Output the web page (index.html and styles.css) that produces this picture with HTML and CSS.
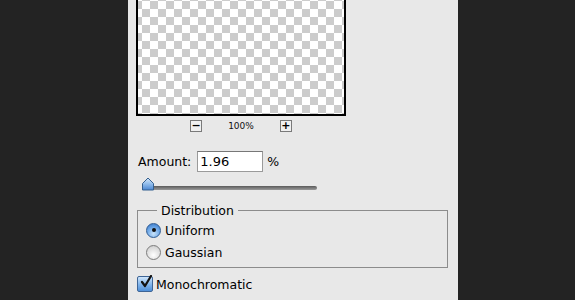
FILE: index.html
```html
<!DOCTYPE html>
<html lang="en">
<head>
  <meta charset="UTF-8">
  <title>Add Noise</title>
  <link rel="stylesheet" href="styles.css">
</head>
<body>
  <div class="panel">
    <div class="preview"></div>
    <div class="zoom-row">
      <span class="zoom-btn">&minus;</span>
      <span class="zoom-value">100%</span>
      <span class="zoom-btn">+</span>
    </div>

    <div class="amount-row">
      <label for="amount">Amount:</label>
      <input type="text" id="amount" value="1.96">
      <span class="unit">%</span>
    </div>
    <div class="slider">
      <div class="slider-track"></div>
      <svg class="slider-thumb" width="14" height="14" viewBox="0 0 14 14">
        <defs>
          <linearGradient id="thumb" x1="0" y1="0" x2="0" y2="1">
            <stop offset="0" stop-color="#d6e8fb"/>
            <stop offset="0.5" stop-color="#8fbbeb"/>
            <stop offset="1" stop-color="#4a86d2"/>
          </linearGradient>
        </defs>
        <path d="M1.5 13 L1.5 6.5 L7 1 L12.5 6.5 L12.5 13 Z" fill="url(#thumb)" stroke="#35608f" stroke-width="1" stroke-linejoin="round"/>
      </svg>
    </div>

    <fieldset class="group">
      <legend>Distribution</legend>
      <label class="option"><span class="radio checked"></span>Uniform</label>
      <label class="option"><span class="radio"></span>Gaussian</label>
    </fieldset>

    <label class="option check-row">
      <span class="checkbox">
        <svg width="14" height="14" viewBox="0 0 14 14">
          <path d="M3 7 L6 11 L12 1" fill="none" stroke="#111" stroke-width="2.2" stroke-linecap="round" stroke-linejoin="round"/>
        </svg>
      </span>Monochromatic
    </label>
  </div>
</body>
</html>
```
FILE: styles.css
```css
body {
  margin: 0;
  background: #232323;
  height: 300px;
  overflow: hidden;
  font-family: "DejaVu Sans", sans-serif;
  color: #000;
}
.panel {
  margin-left: 128px;
  width: 330px;
  height: 300px;
  background: #e8e8e8;
  padding-left: 8px;
  box-sizing: border-box;
}
.preview {
  width: 206px;
  height: 114px;
  border: 2px solid #000;
  border-top: none;
  background-color: #fff;
  background-image:
    linear-gradient(45deg, #cccccc 25%, transparent 25%, transparent 75%, #cccccc 75%),
    linear-gradient(45deg, #cccccc 25%, transparent 25%, transparent 75%, #cccccc 75%);
  background-size: 16px 16px;
  background-position: -4px -7px, 4px 1px;
}
.zoom-row {
  width: 210px;
  display: flex;
  justify-content: center;
  align-items: center;
  gap: 26px;
  margin-top: 4px;
  height: 12px;
}
.zoom-btn {
  width: 10px;
  height: 10px;
  border: 1px solid #7a7a7a;
  background: #f0f0f0;
  font-size: 11px;
  font-weight: bold;
  line-height: 10px;
  text-align: center;
}
.zoom-value {
  font-size: 9px;
  color: #111;
}
.amount-row {
  display: flex;
  align-items: center;
  margin-top: 19px;
  padding-left: 2px;
  font-size: 12.5px;
}
.amount-row input {
  margin-left: 6px;
  width: 66px;
  height: 21px;
  box-sizing: border-box;
  border: 1px solid #9a9a9a;
  border-top-color: #777;
  padding: 0 2px;
  font-family: "DejaVu Sans", sans-serif;
  font-size: 13px;
  background: #fff;
}
.unit {
  margin-left: 4px;
}
.slider {
  position: relative;
  width: 176px;
  height: 14px;
  margin-top: 5px;
  margin-left: 5px;
}
.slider-track {
  position: absolute;
  left: 6px;
  top: 9px;
  width: 170px;
  height: 4px;
  border-radius: 2px;
  background: linear-gradient(#5a5a5a, #9a9a9a);
}
.slider-thumb {
  position: absolute;
  left: 0;
  top: 0;
}
.group {
  margin: 12px 0 0 1px;
  width: 311px;
  height: 65px;
  box-sizing: border-box;
  border: 1px solid #8c8c8c;
  padding: 1px 0 0 8px;
  font-size: 12.5px;
}
.group legend {
  margin-left: 11px;
  padding: 0 4px;
}
.option {
  display: flex;
  align-items: center;
  height: 22px;
  font-size: 12.5px;
}
.radio {
  width: 13px;
  height: 13px;
  border-radius: 50%;
  border: 1px solid #7c7c7c;
  background: radial-gradient(circle at 50% 70%, #ffffff, #d8d8d8 70%, #bdbdbd);
  margin-right: 4px;
  position: relative;
}
.radio.checked {
  border-color: #2f5c93;
  background: radial-gradient(circle at 50% 75%, #c9e4fb, #6aa5e6 55%, #2f6fc2);
}
.radio.checked::after {
  content: "";
  position: absolute;
  left: 4.5px;
  top: 4.5px;
  width: 4px;
  height: 4px;
  border-radius: 50%;
  background: #111;
}
.check-row {
  margin-top: 5px;
  margin-left: 1px;
}
.checkbox {
  width: 14px;
  height: 14px;
  border: 1px solid #3e6596;
  border-radius: 2px;
  background: linear-gradient(#cfe5fb, #7fb3ea 55%, #4f8fd8);
  margin-right: 3px;
  position: relative;
}
.checkbox svg {
  position: absolute;
  left: 1px;
  top: -2px;
}
```
